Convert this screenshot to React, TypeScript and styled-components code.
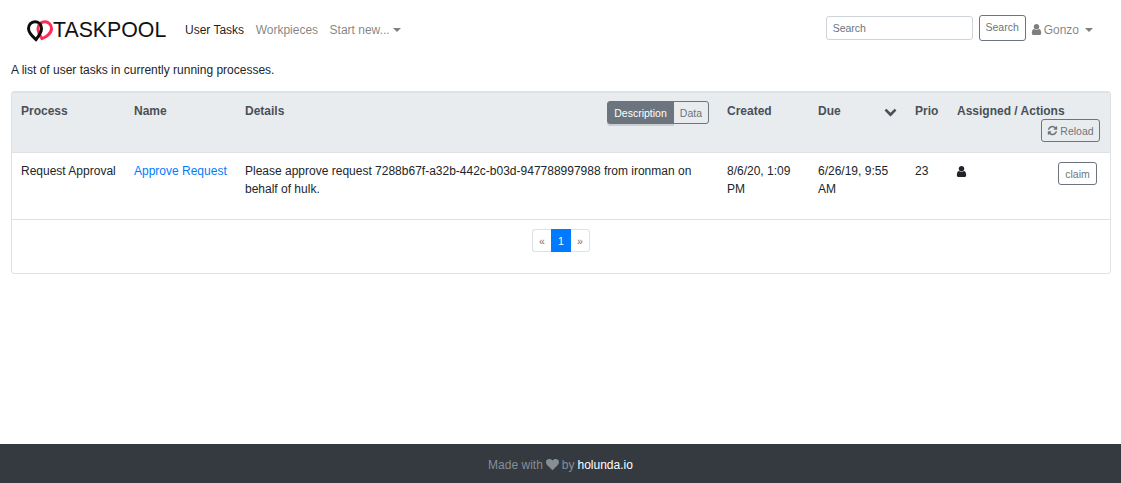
import styled, { createGlobalStyle } from "styled-components";

const GlobalStyle = createGlobalStyle`
  html, body {
    margin: 0;
    padding: 0;
    background: #fff;
  }
  body {
    font-family: "Liberation Sans", Arial, sans-serif;
    font-size: 12px;
    line-height: 18px;
    color: #212529;
  }
`;

const Page = styled.div`
  display: flex;
  flex-direction: column;
  min-height: 483px;
`;

const Navbar = styled.nav`
  display: flex;
  align-items: center;
  height: 59px;
  padding: 0 28px 0 26px;
`;

const Brand = styled.a`
  display: flex;
  align-items: center;
  margin-right: 13px;
  font-size: 21.3px;
  line-height: 24px;
  color: #111;
`;

const NavLink = styled.a<{ $active?: boolean }>`
  padding: 0 5.75px;
  color: ${(p) => (p.$active ? "rgba(0,0,0,.9)" : "rgba(0,0,0,.5)")};
  white-space: nowrap;
`;

const Caret = styled.span`
  display: inline-block;
  margin-left: 3px;
  vertical-align: 2px;
  border-top: 4px solid currentColor;
  border-left: 4px solid transparent;
  border-right: 4px solid transparent;
`;

const SearchForm = styled.form`
  display: flex;
  align-items: center;
  gap: 6px;
  margin-left: auto;
  margin-top: -3px;
`;

const SearchInput = styled.input`
  box-sizing: border-box;
  width: 147px;
  height: 24px;
  padding: 0 6px;
  border: 1px solid #ced4da;
  border-radius: 3px;
  font: inherit;
  font-size: 10.5px;
  &::placeholder {
    color: #6c757d;
    opacity: 1;
  }
`;

const OutlineButton = styled.button`
  display: inline-flex;
  align-items: center;
  justify-content: center;
  gap: 3px;
  box-sizing: border-box;
  padding: 0 6px;
  height: 23px;
  border: 1px solid #6c757d;
  border-radius: 3px;
  background: transparent;
  color: #6c757d;
  font-family: inherit;
  font-size: 10.5px;
  white-space: nowrap;
`;

const SearchButton = styled(OutlineButton)`
  width: 47px;
  height: 26px;
  padding-bottom: 3px;
`;

const ReloadButton = styled(OutlineButton)`
  width: 59px;
  gap: 2px;
  padding: 0;
  margin-top: -1px;
`;

const UserMenu = styled.a`
  display: flex;
  align-items: center;
  gap: 1px;
  margin-left: 4px;
  color: rgba(0, 0, 0, 0.5);
  ${Caret} {
    margin-left: 5px;
    vertical-align: 0;
  }
`;

const Main = styled.main`
  flex: 1;
  padding: 2px 10px 0 11px;
`;

const Lead = styled.p`
  margin: 0 0 12px;
`;

const Card = styled.div`
  border: 1px solid #dee2e6;
  border-radius: 3px;
`;

const Table = styled.table`
  width: 100%;
  table-layout: fixed;
  border-collapse: collapse;
`;

const HeadCell = styled.th<{ $width?: number }>`
  width: ${(p) => (p.$width ? `${p.$width}px` : "auto")};
  height: 60px;
  box-sizing: border-box;
  padding: 9px 9px 0;
  vertical-align: top;
  text-align: left;
  font-weight: 700;
  color: #495057;
  background: #e9ecef;
  border-top: 1px solid #dee2e6;
  border-bottom: 1px solid #dee2e6;
`;

const DetailsHead = styled.div`
  display: flex;
  justify-content: space-between;
  align-items: flex-start;
`;

const DueHead = styled.div`
  display: flex;
  justify-content: space-between;
  align-items: center;
`;

const ToggleGroup = styled.div`
  display: flex;
  height: 23px;
  margin-top: -1px;
`;

const ToggleButton = styled.button<{ $on?: boolean }>`
  box-sizing: border-box;
  padding: 0 6px;
  border: 1px solid #6c757d;
  background: ${(p) => (p.$on ? "#6c757d" : "transparent")};
  color: ${(p) => (p.$on ? "#fff" : "#6c757d")};
  font-family: inherit;
  font-size: 10.5px;
  border-radius: ${(p) => (p.$on ? "3px 0 0 3px" : "0 3px 3px 0")};
  ${(p) => (p.$on ? "box-shadow: 0 2px 0 rgba(108,117,125,.25);" : "margin-left: -1px;")}
`;

const ActionsRow = styled.div`
  display: flex;
  justify-content: flex-end;
  margin-right: 1px;
`;

const BodyCell = styled.td`
  padding: 9px 9px 21px;
  vertical-align: top;
  border-bottom: 1px solid #dee2e6;
`;

const TaskLink = styled.a`
  color: #007bff;
`;

const AssignedCell = styled.div`
  display: flex;
  justify-content: space-between;
  align-items: flex-start;
  > svg {
    margin: 3px 0 0 -2px;
  }
`;

const ClaimButton = styled(OutlineButton)`
  width: 39px;
  margin-right: 4px;
`;

const Pager = styled.ul`
  display: flex;
  justify-content: center;
  margin: 0;
  padding: 9px 0 21px;
  list-style: none;
`;

const PageItem = styled.li<{ $active?: boolean }>`
  box-sizing: border-box;
  width: ${(p) => (p.$active ? "20px" : "19px")};
  height: 23px;
  display: flex;
  align-items: center;
  justify-content: center;
  font-size: 10.5px;
  color: ${(p) => (p.$active ? "#fff" : "#6c757d")};
  background: ${(p) => (p.$active ? "#007bff" : "#fff")};
  border: 1px solid ${(p) => (p.$active ? "#007bff" : "#dee2e6")};
  &:first-child {
    border-radius: 3px 0 0 3px;
    border-right: 0;
  }
  &:last-child {
    border-radius: 0 3px 3px 0;
    border-left: 0;
  }
`;

const Footer = styled.footer`
  display: flex;
  align-items: center;
  justify-content: center;
  gap: 3px;
  height: 39px;
  padding-top: 2px;
  box-sizing: border-box;
  background: #343a40;
  color: #868e96;
  a {
    color: #fff;
  }
`;

// Font Awesome 4 glyphs, the package only ships the v5 shapes
const glyphs = {
  user: "M1536 1399q0 109-62.5 187t-150.5 78h-854q-88 0-150.5-78t-62.5-187q0-85 8.5-160.5t31.5-152 58.5-131 94-89 134.5-34.5q131 128 313 128t313-128q76 0 134.5 34.5t94 89 58.5 131 31.5 152 8.5 160.5zm-256-887q0 159-112.5 271.5t-271.5 112.5-271.5-112.5-112.5-271.5 112.5-271.5 271.5-112.5 271.5 112.5 112.5 271.5z",
  refresh:
    "M1639 1056q0 5-1 7-64 268-268 434.5t-478 166.5q-146 0-282.5-55t-243.5-157l-129 129q-19 19-45 19t-45-19-19-45v-448q0-26 19-45t45-19h448q26 0 45 19t19 45-19 45l-137 137q71 66 161 102t187 36q134 0 250-65t186-179q11-17 53-117 8-23 30-23h192q13 0 22.5 9.5t9.5 22.5zm25-800v448q0 26-19 45t-45 19h-448q-26 0-45-19t-19-45 19-45l138-138q-148-137-349-137-134 0-250 65t-186 179q-11 17-53 117-8 23-30 23h-199q-13 0-22.5-9.5t-9.5-22.5v-7q65-268 270-434.5t480-166.5q146 0 284 55.5t245 156.5l130-129q19-19 45-19t45 19 19 45z",
  chevron:
    "M1683 808l-742 741q-19 19-45 19t-45-19l-742-741q-19-19-19-45.5t19-45.5l166-165q19-19 45-19t45 19l531 531 531-531q19-19 45-19t45 19l166 165q19 19 19 45.5t-19 45.5z",
  heart:
    "M896 1664q-26 0-44-18l-624-602q-10-8-27.5-26t-55.5-65.5-68-97.5-53.5-121-23.5-138q0-220 127-344t351-124q62 0 126.5 21.5t120 58 95.5 68.5 76 68q36-36 76-68t95.5-68.5 120-58 126.5-21.5q224 0 351 124t127 344q0 221-229 450l-623 600q-18 18-44 18z",
};

function Icon({ name, size = 12 }: { name: keyof typeof glyphs; size?: number }) {
  return (
    <svg width={size} height={size} viewBox="0 0 1792 1792" fill="currentColor">
      <path d={glyphs[name]} />
    </svg>
  );
}

function Logo() {
  return (
    <svg width="27" height="24" viewBox="0 0 27 24" fill="none">
      <path
        d="M19 3.700c-4 0-7 3-7 6.900 0 4.200 2.200 7.600 4 10 4-1.400 9.500-5 9.500-10 0-3.900-3-6.900-6.500-6.900z"
        stroke="#ff2d55"
        strokeWidth="3"
      />
      <path
        d="M8.800 3.700C5.200 3.700 2.500 6.800 2.500 10.500c0 4.700 4 8 7.500 11 2.200-2.900 5.500-6.500 5.500-11 0-4-2.900-6.800-6.700-6.800z"
        stroke="#0c0c0c"
        strokeWidth="3"
      />
    </svg>
  );
}

export default function App() {
  return (
    <Page>
      <GlobalStyle />
      <Navbar>
        <Brand>
          <Logo />
          TASKPOOL
        </Brand>
        <NavLink $active>User Tasks</NavLink>
        <NavLink>Workpieces</NavLink>
        <NavLink>
          Start new...
          <Caret />
        </NavLink>
        <SearchForm>
          <SearchInput placeholder="Search" />
          <SearchButton type="button">Search</SearchButton>
        </SearchForm>
        <UserMenu>
          <Icon name="user" size={13} />
          Gonzo
          <Caret />
        </UserMenu>
      </Navbar>
      <Main>
        <Lead>A list of user tasks in currently running processes.</Lead>
        <Card>
          <Table>
            <thead>
              <tr>
                <HeadCell $width={113}>Process</HeadCell>
                <HeadCell $width={111}>Name</HeadCell>
                <HeadCell>
                  <DetailsHead>
                    Details
                    <ToggleGroup>
                      <ToggleButton $on>Description</ToggleButton>
                      <ToggleButton>Data</ToggleButton>
                    </ToggleGroup>
                  </DetailsHead>
                </HeadCell>
                <HeadCell $width={91}>Created</HeadCell>
                <HeadCell $width={97}>
                  <DueHead>
                    Due
                    <Icon name="chevron" size={13} />
                  </DueHead>
                </HeadCell>
                <HeadCell $width={42}>Prio</HeadCell>
                <HeadCell $width={162}>
                  Assigned / Actions
                  <ActionsRow>
                    <ReloadButton type="button">
                      <Icon name="refresh" size={11} />
                      Reload
                    </ReloadButton>
                  </ActionsRow>
                </HeadCell>
              </tr>
            </thead>
            <tbody>
              <tr>
                <BodyCell>Request Approval</BodyCell>
                <BodyCell>
                  <TaskLink>Approve Request</TaskLink>
                </BodyCell>
                <BodyCell>
                  Please approve request 7288b67f-a32b-442c-b03d-947788997988 from ironman on behalf of hulk.
                </BodyCell>
                <BodyCell>8/6/20, 1:09 PM</BodyCell>
                <BodyCell>6/26/19, 9:55 AM</BodyCell>
                <BodyCell>23</BodyCell>
                <BodyCell>
                  <AssignedCell>
                    <Icon name="user" size={13} />
                    <ClaimButton type="button">claim</ClaimButton>
                  </AssignedCell>
                </BodyCell>
              </tr>
            </tbody>
          </Table>
          <Pager>
            <PageItem>«</PageItem>
            <PageItem $active>1</PageItem>
            <PageItem>»</PageItem>
          </Pager>
        </Card>
      </Main>
      <Footer>
        Made with <Icon name="heart" size={13} /> by <a>holunda.io</a>
      </Footer>
    </Page>
  );
}
